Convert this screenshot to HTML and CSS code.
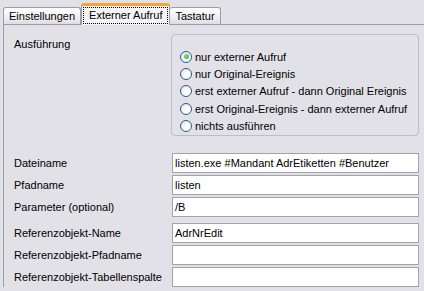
FILE: index.html
```html
<!DOCTYPE html>
<html lang="de">

<head>
    <meta charset="UTF-8">
    <title>Externer Aufruf</title>
    <link rel="stylesheet" href="styles.css">
</head>

<body>

    <nav class="tabs">
        <button class="tab">Einstellungen</button>
        <button class="tab active"><span class="focus">Externer Aufruf</span></button>
        <button class="tab">Tastatur</button>
    </nav>

    <main class="panel">
        <section class="row row-gruppe">
            <span class="label label-top">Ausführung</span>
            <fieldset class="gruppe">
                <label class="radio"><span class="kreis an"></span>nur externer Aufruf</label>
                <label class="radio"><span class="kreis"></span>nur Original-Ereignis</label>
                <label class="radio"><span class="kreis"></span>erst externer Aufruf - dann Original Ereignis</label>
                <label class="radio"><span class="kreis"></span>erst Original-Ereignis - dann externer Aufruf</label>
                <label class="radio"><span class="kreis"></span>nichts ausführen</label>
            </fieldset>
        </section>

        <section class="felder">
            <div class="row"><span class="label">Dateiname</span><span class="feld">listen.exe #Mandant AdrEtiketten #Benutzer</span></div>
            <div class="row"><span class="label">Pfadname</span><span class="feld">listen</span></div>
            <div class="row"><span class="label">Parameter (optional)</span><span class="feld">/B</span></div>
        </section>

        <section class="felder">
            <div class="row"><span class="label">Referenzobjekt-Name</span><span class="feld">AdrNrEdit</span></div>
            <div class="row"><span class="label">Referenzobjekt-Pfadname</span><span class="feld"></span></div>
            <div class="row"><span class="label">Referenzobjekt-Tabellenspalte</span><span class="feld"></span></div>
        </section>
    </main>

</body>

</html>
```

FILE: styles.css
```css
body {
    margin: 0;
    background-color: #e2e1e7;
    font-family: "Liberation Sans", Arial, sans-serif;
    font-size: 11px;
    color: black;
    height: 291px;
    overflow: hidden;
}

.tabs {
    display: flex;
    align-items: flex-end;
    height: 24px;
    padding-left: 3px;
}

.tab {
    height: 17px;
    padding: 0 5px 0 5px;
    border: 1px solid #9d9ca7;
    border-bottom: none;
    border-radius: 3px 3px 0 0;
    background: linear-gradient(#ffffff, #ecebf0 70%, #dcdbe2);
    font: inherit;
    color: black;
    line-height: 15px;
}

.tab + .tab {
    border-left: none;
}

.tab.active {
    height: 22px;
    margin-bottom: -1px;
    padding: 0 1px;
    border-top: 3px solid #f0a43a;
    border-left: 1px solid #9d9ca7;
    background: #f4f4f7;
    position: relative;
}

.tab.active + .tab {
    border-left: none;
}

.focus {
    display: block;
    padding: 1px 5px;
    border: 1px dotted black;
    line-height: 13px;
}

.panel {
    margin-left: 3px;
    border-top: 1px solid #9d9ca7;
    border-left: 1px solid #9d9ca7;
    padding: 9px 0 0 10px;
}

.row {
    display: grid;
    grid-template-columns: 157px 248px;
    align-items: center;
}

.row-gruppe {
    align-items: start;
}

.label-top {
    margin-top: 4px;
}

.gruppe {
    margin: 0;
    padding: 13px 0 0 8px;
    border: 1px solid #bdbcc8;
    border-radius: 4px;
    height: 87px;
}

.radio {
    display: flex;
    align-items: center;
    height: 17.4px;
}

.kreis {
    width: 10px;
    height: 10px;
    border: 1px solid #2d5a8c;
    border-radius: 50%;
    margin-right: 3px;
    background: radial-gradient(circle at 65% 65%, #ffffff 30%, #dcdcd8 100%);
    display: flex;
    align-items: center;
    justify-content: center;
}

.kreis.an::after {
    content: "";
    width: 5px;
    height: 5px;
    border-radius: 50%;
    background: radial-gradient(circle at 40% 40%, #8ee28e, #21a121);
}

.felder {
    display: grid;
    gap: 2px;
    margin-top: 17px;
}

.felder + .felder {
    margin-top: 6px;
}

.feld {
    display: block;
    height: 18px;
    margin-left: 1px;
    border: 1px solid #a4a3ad;
    background: white;
    padding-left: 2px;
    line-height: 18px;
    white-space: nowrap;
}
```
